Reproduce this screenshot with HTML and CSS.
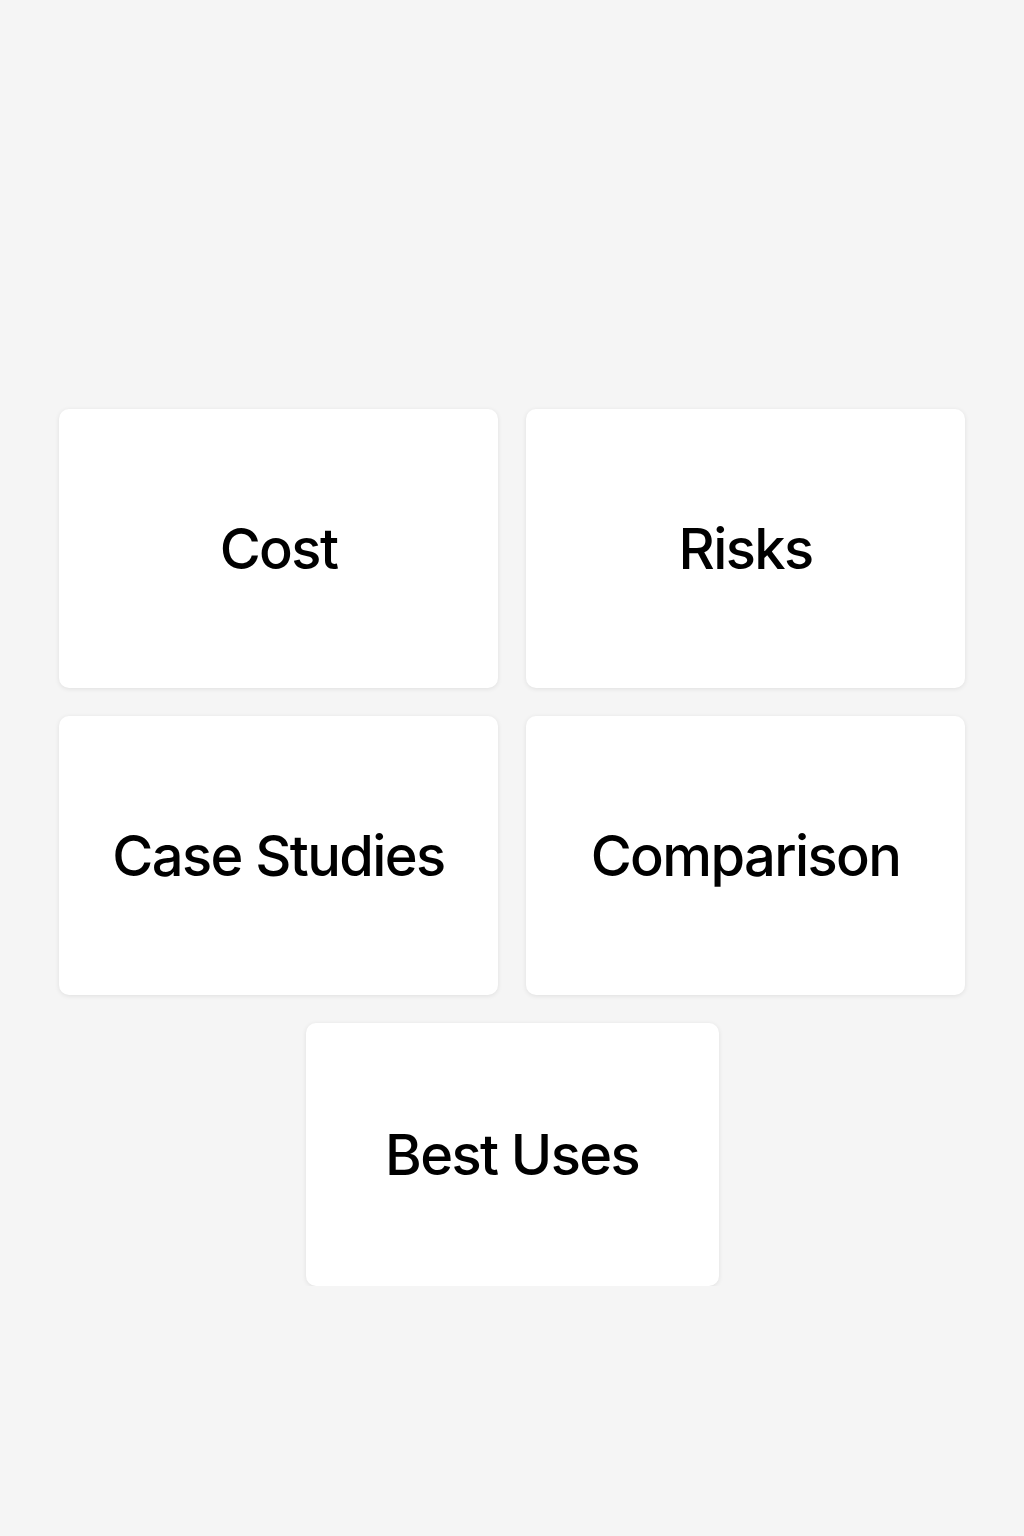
FILE: index.html
```html
<!DOCTYPE html>
<html lang="en">
<head>
  <meta charset="UTF-8">
  <title>Topics</title>
  <link rel="stylesheet" href="styles.css">
</head>
<body>
  <div class="grid">
    <div class="card">Cost</div>
    <div class="card">Risks</div>
    <div class="card">Case Studies</div>
    <div class="card">Comparison</div>
    <div class="card card-last">Best Uses</div>
  </div>
</body>
</html>
```

FILE: styles.css
```css
body {
  font-family: Inter, "Noto Sans", sans-serif;
  background-color: #f5f5f5;
  margin: 0;
  padding: 0;
}
.grid {
  display: flex;
  flex-wrap: wrap;
  justify-content: center;
  gap: 28px;
  width: 907px;
  margin: 0 auto;
  padding: 409px 0 0 0;
}
.card {
  width: 439px;
  height: 279px;
  background-color: #ffffff;
  border-radius: 10px;
  box-shadow: 0 1px 5px rgba(0, 0, 0, 0.09);
  display: flex;
  align-items: center;
  justify-content: center;
  font-size: 56px;
  font-weight: 500;
  color: #000000;
  letter-spacing: -1.6px;
}
.card-last {
  width: 413px;
  height: 263px;
}
```
